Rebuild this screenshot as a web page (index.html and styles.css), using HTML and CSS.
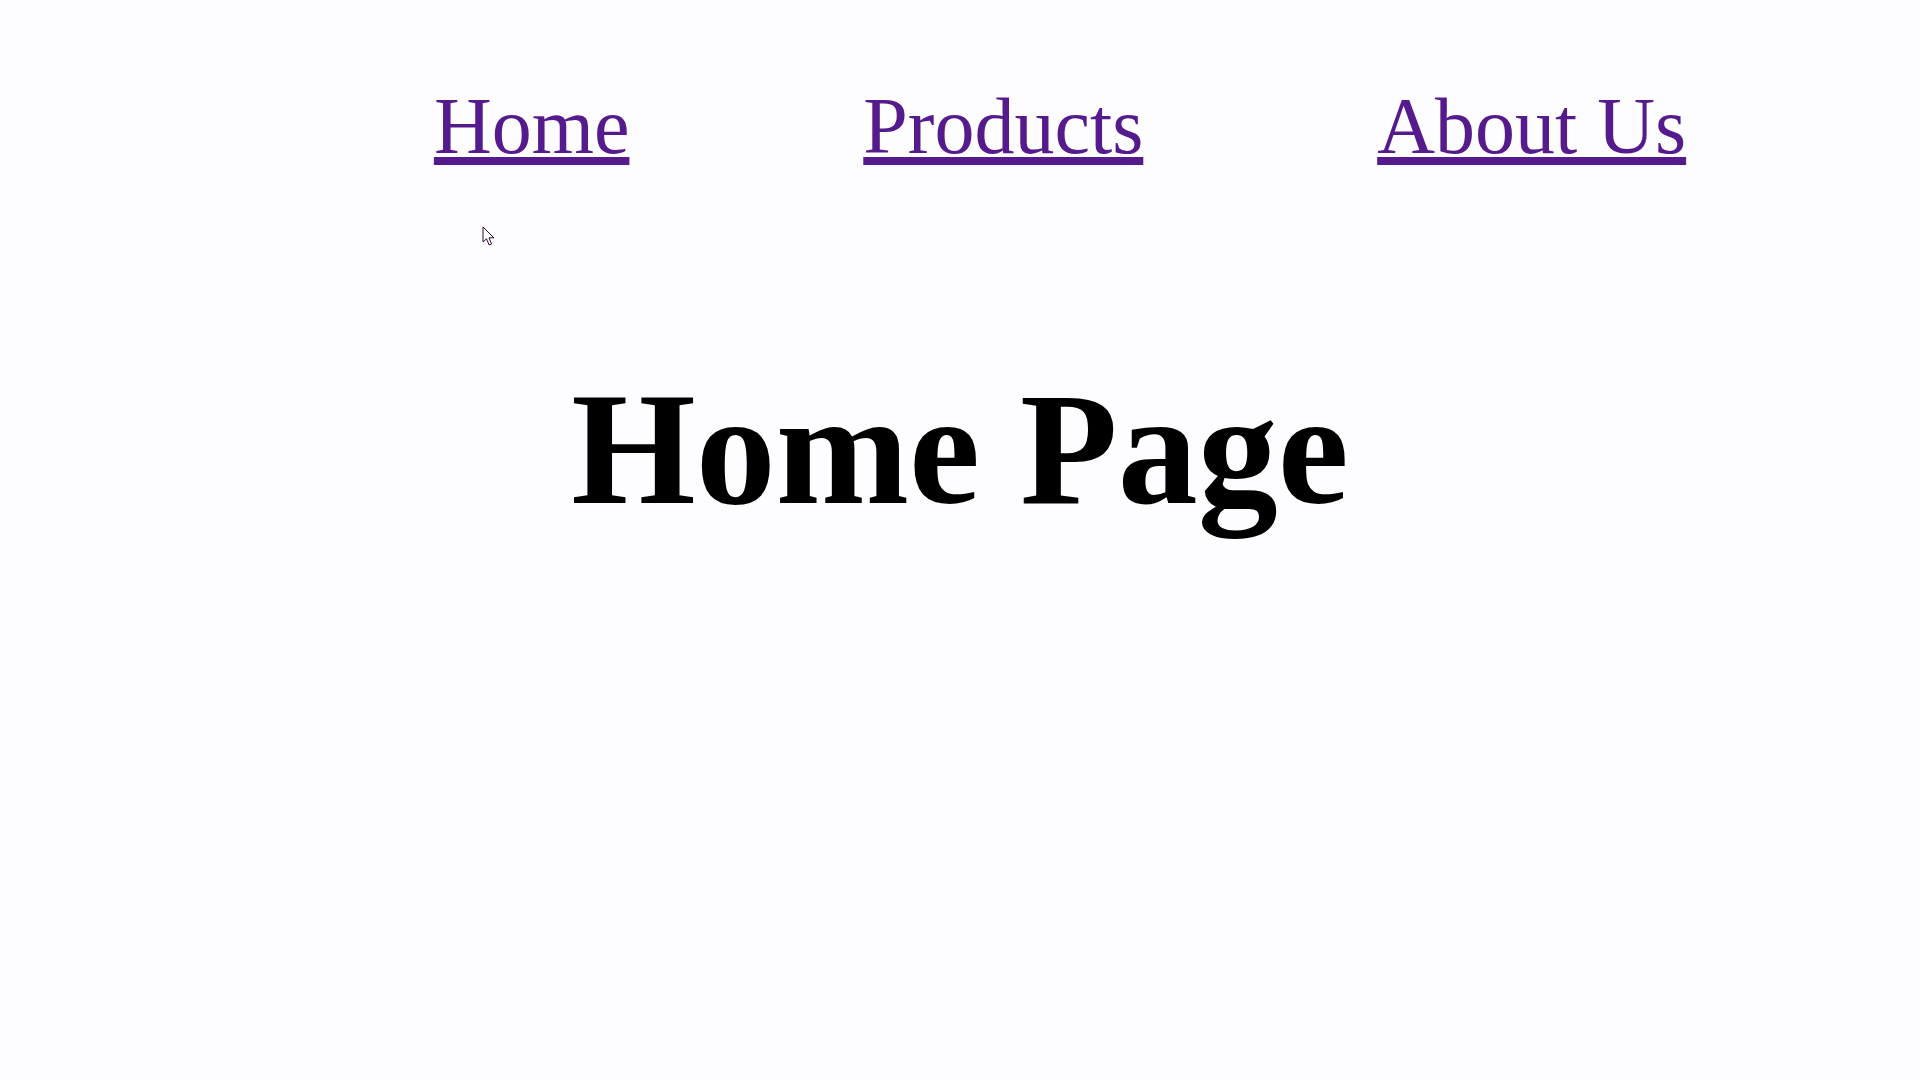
FILE: index.html
```html
<!DOCTYPE html>
<html lang="en">
<head>
<meta charset="utf-8">
<title>Home Page</title>
<link rel="stylesheet" href="styles.css">
</head>
<body>
<nav class="nav">
  <a class="nav-link" href="#">Home</a>
  <a class="nav-link" href="#">Products</a>
  <a class="nav-link" href="#">About Us</a>
</nav>
<main class="main">
  <h1 class="title">Home Page</h1>
</main>
<svg class="cursor" width="14" height="22" viewBox="0 0 14 22" aria-hidden="true">
  <path d="M1 1 L1 16 L4.5 12.8 L7.2 19 L9.6 18 L7 11.8 L11.8 11.8 Z" fill="#ffffff" stroke="#2a0a3a" stroke-width="1" stroke-linejoin="miter"/>
</svg>
</body>
</html>
```
FILE: styles.css
```css
html, body {
  margin: 0;
  padding: 0;
  background: #fdfcff;
}
body {
  font-family: "Liberation Serif", "Times New Roman", serif;
  min-height: 1080px;
  position: relative;
}
.nav {
  display: flex;
  justify-content: space-evenly;
  padding: 81px 0 0 200px;
  font-size: 80px;
  line-height: normal;
}
.nav-link {
  color: #551a8b;
  text-decoration: underline;
}
.main {
  margin-top: 185px;
}
.title {
  margin: 0;
  text-align: center;
  font-size: 160px;
  font-weight: bold;
  line-height: normal;
  color: #000;
}
.cursor {
  position: absolute;
  left: 482px;
  top: 226px;
}
```
